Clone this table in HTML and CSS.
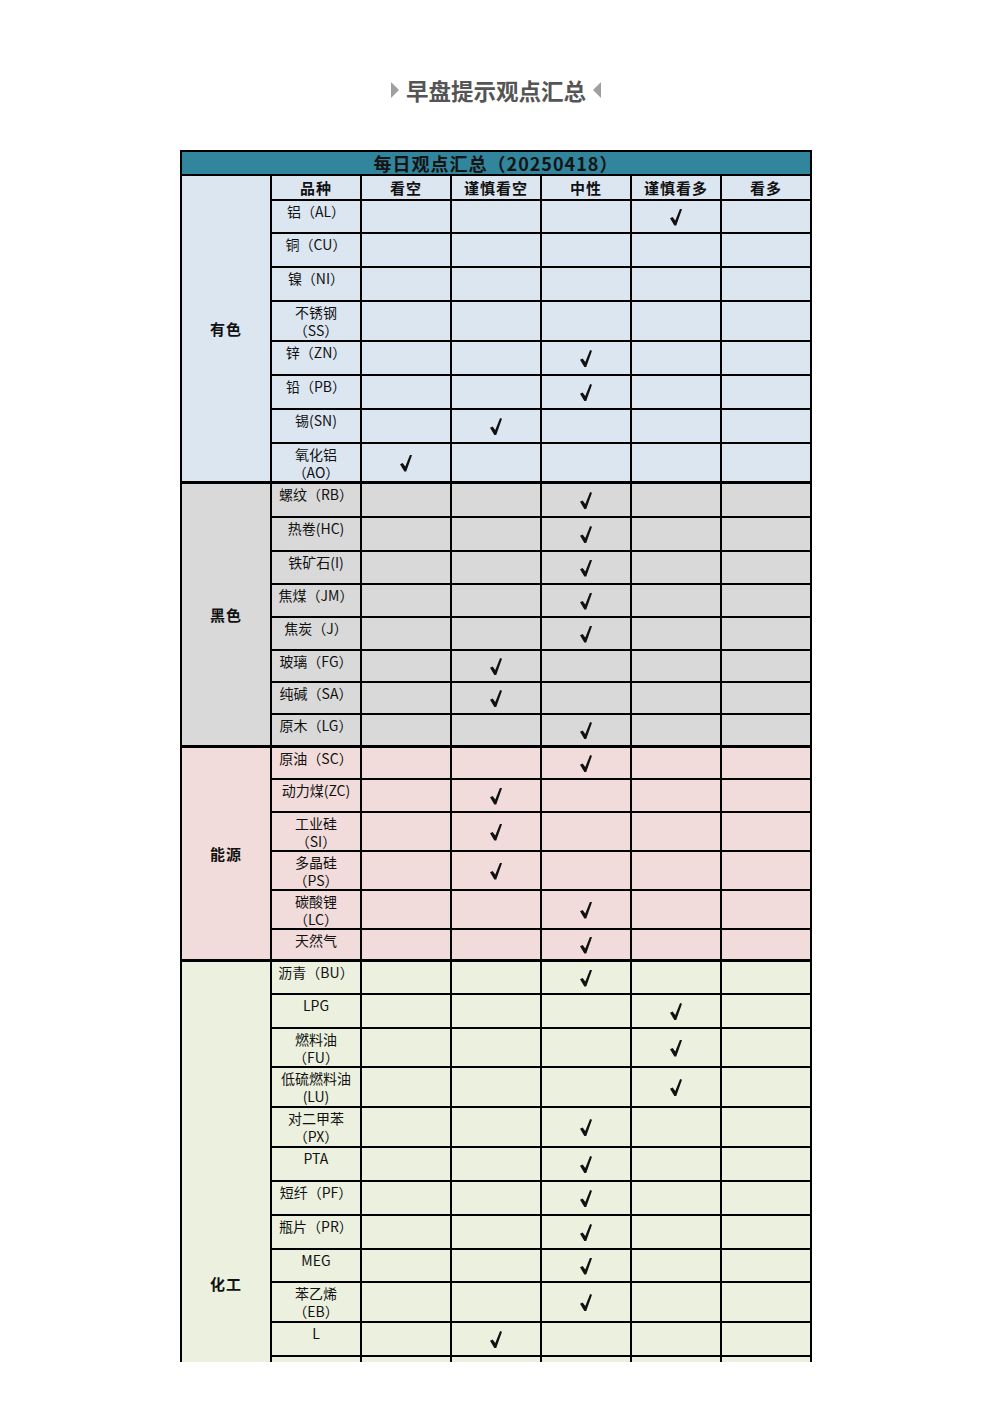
FILE: index.html
```html
<!DOCTYPE html>
<html lang="zh-CN">
<head>
<meta charset="utf-8">
<title>早盘提示观点汇总</title>
<link rel="stylesheet" href="styles.css">
</head>
<body>
<div class="page">
  <h1 class="headline"><span class="tri tri-r"></span><span>早盘提示观点汇总</span><span class="tri tri-l"></span></h1>
  <div class="sheet-wrap">
    <table class="sheet">
      <colgroup><col><col><col><col><col><col><col></colgroup>
      <tbody>
        <tr class="h24"><td class="title" colspan="7">每日观点汇总（20250418）</td></tr>
      </tbody>
      <tbody class="g-blue">
        <tr class="h25"><td class="cat" rowspan="9">有色</td><td class="th">品种</td><td class="th">看空</td><td class="th">谨慎看空</td><td class="th">中性</td><td class="th">谨慎看多</td><td class="th">看多</td></tr>
        <tr class="h33"><td class="v">铝（AL）</td><td></td><td></td><td></td><td class="y"></td><td></td></tr>
        <tr class="h34"><td class="v">铜（CU）</td><td></td><td></td><td></td><td></td><td></td></tr>
        <tr class="h34"><td class="v">镍（NI）</td><td></td><td></td><td></td><td></td><td></td></tr>
        <tr class="h40"><td class="v">不锈钢<br>（SS）</td><td></td><td></td><td></td><td></td><td></td></tr>
        <tr class="h34"><td class="v">锌（ZN）</td><td></td><td></td><td class="y"></td><td></td><td></td></tr>
        <tr class="h34"><td class="v">铅（PB）</td><td></td><td></td><td class="y"></td><td></td><td></td></tr>
        <tr class="h34"><td class="v">锡(SN)</td><td></td><td class="y"></td><td></td><td></td><td></td></tr>
        <tr class="h40"><td class="v">氧化铝<br>（AO）</td><td class="y"></td><td></td><td></td><td></td><td></td></tr>
      </tbody>
      <tbody class="g-grey">
        <tr class="h34"><td class="cat" rowspan="8">黑色</td><td class="v">螺纹（RB）</td><td></td><td></td><td class="y"></td><td></td><td></td></tr>
        <tr class="h34"><td class="v">热卷(HC)</td><td></td><td></td><td class="y"></td><td></td><td></td></tr>
        <tr class="h33"><td class="v">铁矿石(I)</td><td></td><td></td><td class="y"></td><td></td><td></td></tr>
        <tr class="h33"><td class="v">焦煤（JM）</td><td></td><td></td><td class="y"></td><td></td><td></td></tr>
        <tr class="h33"><td class="v">焦炭（J）</td><td></td><td></td><td class="y"></td><td></td><td></td></tr>
        <tr class="h32"><td class="v">玻璃（FG）</td><td></td><td class="y"></td><td></td><td></td><td></td></tr>
        <tr class="h32"><td class="v">纯碱（SA）</td><td></td><td class="y"></td><td></td><td></td><td></td></tr>
        <tr class="h33"><td class="v">原木（LG）</td><td></td><td></td><td class="y"></td><td></td><td></td></tr>
      </tbody>
      <tbody class="g-pink">
        <tr class="h32"><td class="cat" rowspan="6">能源</td><td class="v">原油（SC）</td><td></td><td></td><td class="y"></td><td></td><td></td></tr>
        <tr class="h33"><td class="v">动力煤(ZC)</td><td></td><td class="y"></td><td></td><td></td><td></td></tr>
        <tr class="h39"><td class="v">工业硅<br>（SI）</td><td></td><td class="y"></td><td></td><td></td><td></td></tr>
        <tr class="h39"><td class="v">多晶硅<br>（PS）</td><td></td><td class="y"></td><td></td><td></td><td></td></tr>
        <tr class="h39"><td class="v">碳酸锂<br>（LC）</td><td></td><td></td><td class="y"></td><td></td><td></td></tr>
        <tr class="h32"><td class="v">天然气</td><td></td><td></td><td class="y"></td><td></td><td></td></tr>
      </tbody>
      <tbody class="g-green">
        <tr class="h33"><td class="cat" rowspan="12">化工</td><td class="v">沥青（BU）</td><td></td><td></td><td class="y"></td><td></td><td></td></tr>
        <tr class="h34"><td class="v">LPG</td><td></td><td></td><td></td><td class="y"></td><td></td></tr>
        <tr class="h39"><td class="v">燃料油<br>（FU）</td><td></td><td></td><td></td><td class="y"></td><td></td></tr>
        <tr class="h40"><td class="v">低硫燃料油<br>(LU)</td><td></td><td></td><td></td><td class="y"></td><td></td></tr>
        <tr class="h40"><td class="v">对二甲苯<br>（PX）</td><td></td><td></td><td class="y"></td><td></td><td></td></tr>
        <tr class="h34"><td class="v">PTA</td><td></td><td></td><td class="y"></td><td></td><td></td></tr>
        <tr class="h34"><td class="v">短纤（PF）</td><td></td><td></td><td class="y"></td><td></td><td></td></tr>
        <tr class="h34"><td class="v">瓶片（PR）</td><td></td><td></td><td class="y"></td><td></td><td></td></tr>
        <tr class="h33"><td class="v">MEG</td><td></td><td></td><td class="y"></td><td></td><td></td></tr>
        <tr class="h40"><td class="v">苯乙烯<br>（EB）</td><td></td><td></td><td class="y"></td><td></td><td></td></tr>
        <tr class="h34"><td class="v">L</td><td></td><td class="y"></td><td></td><td></td><td></td></tr>
        <tr class="h-rest"><td></td><td></td><td></td><td></td><td></td><td></td></tr>
      </tbody>
    </table>
  </div>
</div>
</body>
</html>
```
FILE: styles.css
```css
html, body {
  margin: 0;
  padding: 0;
  background: #ffffff;
}
body {
  font-family: "Noto Sans CJK SC", "Noto Sans", sans-serif;
  color: #111;
}
.page {
  padding-top: 74px;
}
.headline {
  margin: 0 0 44px 0;
  height: 32px;
  display: flex;
  justify-content: center;
  align-items: center;
  gap: 7px;
  font-size: 22.5px;
  font-weight: bold;
  color: #555555;
  line-height: 32px;
}
.tri {
  display: block;
  width: 0;
  height: 0;
  border-top: 8px solid transparent;
  border-bottom: 8px solid transparent;
}
.tri-r { border-left: 8px solid #a0a0a0; }
.tri-l { border-right: 8px solid #a0a0a0; }

.sheet-wrap {
  width: 632px;
  height: 1212px;
  margin: 0 auto;
  overflow: hidden;
}
.sheet {
  width: 632px;
  table-layout: fixed;
  border-collapse: separate;
  border-spacing: 0;
  border-top: 2px solid #000;
  border-left: 2px solid #000;
}
.sheet col { width: 90px; }
.sheet td {
  padding: 0;
  border-right: 2px solid #000;
  border-bottom: 2px solid #000;
  box-sizing: border-box;
}
.h24 { height: 24px; }
.h25 { height: 25px; }
.h32 { height: 32px; }
.h33 { height: 33px; }
.h34 { height: 34px; }
.h39 { height: 39px; }
.h40 { height: 40px; }
.h-rest { height: 250px; }

.title {
  background: #31859c;
  text-align: center;
  font-size: 18px;
  font-weight: bold;
  letter-spacing: 1px;
  color: #141414;
  line-height: 22px;
}
.g-blue td { background: #dce6f1; }
.g-grey td { background: #d9d9d9; }
.g-pink td { background: #f2dcdb; }
.g-green td { background: #ebf1de; }

.g-blue > tr:last-child td,
.g-grey > tr:last-child td,
.g-pink > tr:last-child td,
.sheet .g-blue td.cat,
.sheet .g-grey td.cat,
.sheet .g-pink td.cat {
  border-bottom-width: 3px;
}

.cat {
  text-align: center;
  vertical-align: middle;
  font-size: 15px;
  font-weight: bold;
  letter-spacing: 1px;
}
.th {
  text-align: center;
  vertical-align: middle;
  font-size: 15px;
  font-weight: bold;
  letter-spacing: 1px;
  line-height: 20px;
}
.v {
  text-align: center;
  vertical-align: top;
  font-size: 14px;
  line-height: 18px;
  padding-top: 1px !important;
  white-space: nowrap;
  overflow: hidden;
}
.y {
  vertical-align: middle;
}
.y::before {
  content: "";
  display: block;
  margin: 1px auto 0;
  width: 12px;
  height: 17px;
  background: #111;
  clip-path: polygon(0 58%, 22% 50%, 44% 70%, 84% 0, 100% 5%, 52% 100%, 36% 100%);
}
```
